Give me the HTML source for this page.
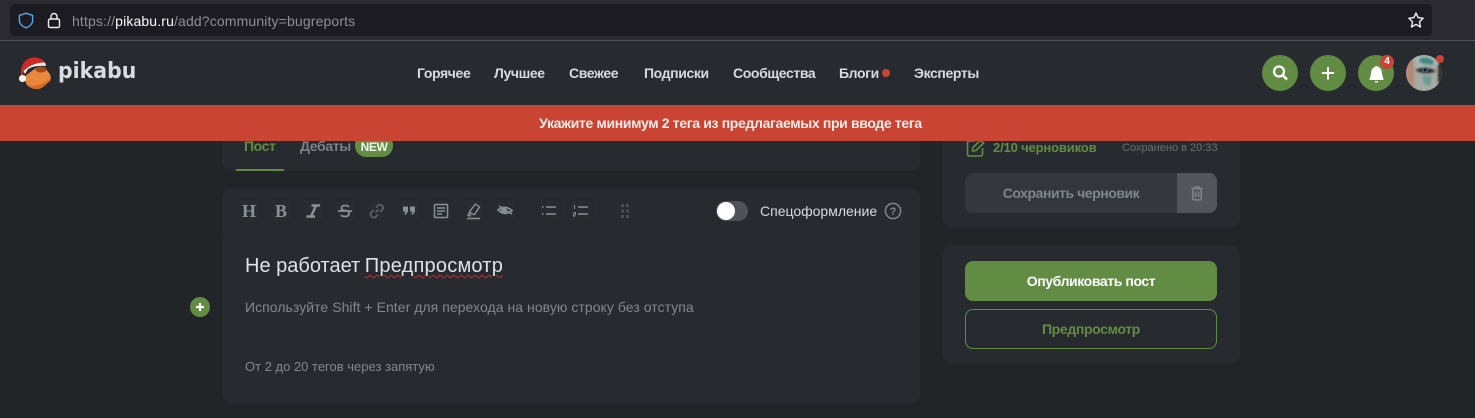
<!DOCTYPE html>
<html><head><meta charset="utf-8"><style>
*{box-sizing:border-box}
html,body{margin:0;padding:0}
body{width:1475px;height:418px;background:#212528;position:relative;overflow:hidden;font-family:"Liberation Sans","Noto Sans CJK SC",sans-serif}
.a{position:absolute;white-space:nowrap}
.nav{top:65px;font-size:14px;font-weight:700;color:#d7dbe0;line-height:17px;letter-spacing:-.38px}
.tb{position:absolute;top:199px;width:24px;height:24px;border-radius:5px;background:#282c30;border:1px solid #24282b}
.tb svg{position:absolute;left:0;top:0}
.g{background:#628c44}
.c{position:absolute;border-radius:50%;background:#628c44}
</style></head><body>
<div class="a" style="left:0;top:0;width:1475px;height:41px;background:#2b2a33;border-bottom:1px solid #53525c"></div>
<div class="a" style="left:10px;top:4px;width:1422px;height:32px;background:#1c1b22;border-radius:5px"></div>
<svg class="a" style="left:18px;top:12px" width="16" height="17" viewBox="0 0 16 17"><path d="M8 1.200 L14.600 3.400 V8.500 C14.600 12 11.500 14.700 8 15.800 C4.500 14.700 1.400 12 1.400 8.500 V3.400 Z" fill="none" stroke="#54a8e8" stroke-width="1.400"/></svg>
<svg class="a" style="left:47px;top:12px" width="14" height="17" viewBox="0 0 14 17"><rect x="1.500" y="7" width="11" height="8.500" rx="1.500" fill="none" stroke="#f0f0f3" stroke-width="1.400"/><path d="M4 7V4.500a3 3 0 0 1 6 0V7" fill="none" stroke="#f0f0f3" stroke-width="1.400"/></svg>
<div class="a" style="left:72px;top:13px;font-size:14px;line-height:16px;letter-spacing:.14px;color:#8f8f96">https://<span style="color:#fbfbfe">pikabu.ru</span>/add?community=bugreports</div>
<svg class="a" style="left:1407px;top:11px" width="18" height="18" viewBox="0 0 18 18"><path d="M9 2 L11.100 6.600 L16.200 7.300 L12.500 10.800 L13.500 16 L9 13.400 L4.500 16 L5.500 10.800 L1.800 7.300 L6.900 6.600 Z" fill="none" stroke="#f0f0f3" stroke-width="1.400" stroke-linejoin="round"/></svg>

<div class="a" style="left:0;top:41px;width:1475px;height:64px;background:#272b2f"></div>
<svg class="a" style="left:17px;top:55px" width="36" height="36" viewBox="0 0 36 36">
<path d="M8 21 L19 13 Q24 10 28 13 L32 18 Q35 22 33 26 L26 32 Q22 35 16 33.500 Q10 32 8.500 27 Z" fill="#e8883a"/>
<path d="M11 30 Q21 33 33 24 Q34 25 33 26 L26 32 Q22 35 16 33.500Q13 33 11 30Z" fill="#d76a1e"/>
<ellipse cx="24" cy="14.500" rx="5.500" ry="3" fill="#a5451e"/>
<path d="M4 22 Q3 8 11 4 Q18 0.500 26 5 L29 10 Q18 6 8 14 Q6 17 6 22Z" fill="#d02a26"/>
<path d="M6.500 16 Q15 7.500 28 7.500 L29 11 Q18 10 11 14 L8 19Z" fill="#f4f1ee"/>
<circle cx="5.500" cy="23.500" r="3.600" fill="#f6f4f2"/></svg>
<div class="a" style="left:58px;top:57px;font-size:22px;font-weight:700;line-height:30px;color:#d9dde0;font-family:'DejaVu Sans',sans-serif;transform-origin:left;transform:scaleX(.93)">pikabu</div>

<div class="a nav" style="left:417px">Горячее</div>
<div class="a nav" style="left:494px">Лучшее</div>
<div class="a nav" style="left:569px">Свежее</div>
<div class="a nav" style="left:644px">Подписки</div>
<div class="a nav" style="left:733px">Сообщества</div>
<div class="a nav" style="left:839px">Блоги</div>
<div class="c" style="left:882px;top:69px;width:8px;height:8px;background:#c94433"></div>
<div class="a nav" style="left:914px">Эксперты</div>

<div class="c" style="left:1262px;top:55px;width:36px;height:36px"></div>
<svg class="a" style="left:1262px;top:55px" width="36" height="36" viewBox="0 0 36 36"><circle cx="17" cy="16.500" r="5" fill="none" stroke="#fff" stroke-width="2.200"/><path d="M20.500 20L25 24.500" stroke="#fff" stroke-width="2.600"/></svg>
<div class="c" style="left:1310px;top:55px;width:36px;height:36px"></div>
<svg class="a" style="left:1310px;top:55px" width="36" height="36" viewBox="0 0 36 36"><path d="M18 12V24.500M11.800 18H24.200" stroke="#fff" stroke-width="2"/></svg>
<div class="c" style="left:1358px;top:55px;width:36px;height:36px"></div>
<svg class="a" style="left:1358px;top:55px" width="36" height="36" viewBox="0 0 36 36"><path d="M18.500 11.500 Q23.500 13 23.500 19 L25 24.500 H12 L13.500 19 Q13.500 13 18.500 11.500Z" fill="#fff" stroke="#fff"/><rect x="17" y="26" width="3" height="1.500" fill="#fff"/></svg>
<div class="c" style="left:1380px;top:55px;width:14px;height:14px;background:#c94433"></div>
<div class="a" style="left:1380px;top:55px;width:14px;text-align:center;font-size:10px;font-weight:700;line-height:14px;color:#fff">4</div>
<svg class="a" style="left:1406px;top:55px" width="40" height="36" viewBox="0 0 40 36">
<defs><clipPath id="av"><circle cx="18" cy="18" r="18"/></clipPath><filter id="bl"><feGaussianBlur stdDeviation="1.100"/></filter></defs>
<g clip-path="url(#av)"><rect width="36" height="36" fill="#a8aaa4"/>
<g filter="url(#bl)">
<rect x="-2" y="0" width="10" height="38" fill="#b48a76"/>
<rect x="32" y="8" width="5" height="20" fill="#302e2d"/>
<path d="M8 0H32V10L8 12Z" fill="#a5b8b3"/>
<path d="M14 3Q22 1 28 6L27 10 18 9 13 7Z" fill="#3d8a82"/>
<path d="M16 21Q20 20 26 21L24 31 18 29Z" fill="#6d9c93"/>
<path d="M9 15Q19 10 30 16Q20 21 9 15Z" fill="#232528"/></g>
<ellipse cx="19" cy="15" rx="3.500" ry="2.600" fill="#4a5c74"/><circle cx="19" cy="15" r="1.300" fill="#0c0d0f"/></g>
<circle cx="34" cy="4" r="4" fill="#c94433"/></svg>

<!-- cards -->
<div class="a" style="left:222px;top:120px;width:698px;height:51px;background:#272b2f;border-radius:10px"></div>
<div class="a" style="left:244px;top:138px;font-size:14px;font-weight:700;line-height:16px;letter-spacing:-.4px;color:#628c44">Пост</div>
<div class="a" style="left:236px;top:169px;width:48px;height:2px;background:#628c44"></div>
<div class="a" style="left:300px;top:138px;font-size:14px;font-weight:700;line-height:16px;letter-spacing:-.35px;color:#7d8188">Дебаты</div>
<div class="a" style="left:355px;top:134px;width:38px;height:23px;border-radius:11px;background:#628c44;color:#f2f5ef;font-size:12px;font-weight:700;text-align:center;line-height:26px;letter-spacing:-.4px">NEW</div>

<div class="a" style="left:222px;top:188px;width:698px;height:216px;background:#272b2f;border-radius:10px"></div>
<div class="a" style="left:222px;top:234px;width:698px;height:1px;background:#24282b"></div>

<div class="tb" style="left:237px"><svg width="22" height="22" viewBox="0 0 22 22"><text x="11" y="17" text-anchor="middle" font-size="18" font-weight="700" fill="#8b8f98" font-family="Liberation Serif">H</text></svg></div>
<div class="tb" style="left:269px"><svg width="22" height="22" viewBox="0 0 22 22"><text x="11" y="17" text-anchor="middle" font-size="18" font-weight="700" fill="#8b8f98" font-family="Liberation Serif">B</text></svg></div>
<div class="tb" style="left:301px"><svg width="22" height="22" viewBox="0 0 22 22"><path d="M9.500 5.500H18M4.500 16.500H13M14 5.500L9 16.500" stroke="#8b8f98" stroke-width="2.400" fill="none"/></svg></div>
<div class="tb" style="left:333px"><svg width="22" height="22" viewBox="0 0 22 22"><path d="M15 7Q14 5.500 11 5.500Q7.500 5.500 7.500 8Q7.500 10.500 11 10.500Q15 10.500 15 13.500Q15 16.500 11 16.500Q8 16.500 7 15M4 11H18" stroke="#8b8f98" stroke-width="1.800" fill="none"/></svg></div>
<div class="tb" style="left:365px;background:#282c30;border-color:#272b2e"><svg width="22" height="22" viewBox="0 0 22 22"><path d="M9.500 12.500L12.500 9.500M10 7.500L12.500 5Q14 3.800 16 5.500Q18 7.500 16.500 9.500L14 12M12 14.500L9.500 17Q7.500 18.300 5.500 16.500Q3.800 14.500 5 12.500L7.500 10" stroke="#5d6168" stroke-width="1.700" fill="none"/></svg></div>
<div class="tb" style="left:397px"><svg width="22" height="22" viewBox="0 0 22 22"><path d="M5 6.500H10V11.500L8 14.500H6.500L7.200 11.500H5ZM12 6.500H17V11.500L15 14.500H13.500L14.200 11.500H12Z" fill="#8b8f98"/></svg></div>
<div class="tb" style="left:429px"><svg width="22" height="22" viewBox="0 0 22 22"><rect x="4.500" y="4.500" width="13" height="13" rx="1" fill="none" stroke="#8b8f98" stroke-width="1.500"/><path d="M7 8H15M7 11H15M7 14H12" stroke="#8b8f98" stroke-width="1.500"/></svg></div>
<div class="tb" style="left:461px"><svg width="22" height="22" viewBox="0 0 22 22"><path d="M13.500 4L17.500 7L12.500 14.500L9 14L8 11ZM8 11.500L6 15.500L9 16M5 18.500H18" stroke="#8b8f98" stroke-width="1.400" fill="none"/></svg></div>
<div class="tb" style="left:493px"><svg width="22" height="22" viewBox="0 0 22 22"><path d="M4 10Q11 4.500 18 10.500Q11 16.500 4 10Z" fill="none" stroke="#8b8f98" stroke-width="1.600"/><circle cx="10" cy="10.500" r="3" fill="#8b8f98"/><path d="M5 6L18 14" stroke="#8b8f98" stroke-width="1.600"/></svg></div>
<div class="tb" style="left:537px"><svg width="22" height="22" viewBox="0 0 22 22"><path d="M8 7H18M8 14H18" stroke="#8b8f98" stroke-width="1.600"/><path d="M4 7H5.500M4 14H5.500" stroke="#8b8f98" stroke-width="1.400"/></svg></div>
<div class="tb" style="left:569px"><svg width="22" height="22" viewBox="0 0 22 22"><path d="M8 7H18M8 14H18" stroke="#8b8f98" stroke-width="1.600"/><path d="M4.500 5V9M3.500 12.500H5.500V14.200H3.500V16H5.500" stroke="#8b8f98" stroke-width="1" fill="none"/></svg></div>
<div class="tb" style="left:613px;background:#282c30;border-color:#272b2e"><svg width="22" height="22" viewBox="0 0 22 22"><g fill="#4b4f54"><rect x="7" y="4" width="3" height="3"/><rect x="12" y="4" width="3" height="3"/><rect x="7" y="9.500" width="3" height="3"/><rect x="12" y="9.500" width="3" height="3"/><rect x="7" y="15" width="3" height="3"/><rect x="12" y="15" width="3" height="3"/></g></svg></div>

<div class="a" style="left:716px;top:201px;width:32px;height:20px;border-radius:10px;background:#4f5358"></div>
<div class="c" style="left:717px;top:202px;width:18px;height:18px;background:#fff"></div>
<div class="a" style="left:760px;top:203px;font-size:14px;line-height:17px;color:#d7dbe0">Спецоформление</div>
<svg class="a" style="left:884px;top:202px" width="18" height="18" viewBox="0 0 18 18"><circle cx="9" cy="9" r="7.600" fill="none" stroke="#83878d" stroke-width="1.500"/><text x="9" y="13" text-anchor="middle" font-size="11" font-weight="700" fill="#83878d" font-family="Liberation Sans">?</text></svg>

<div class="a" style="left:245px;top:255px;font-size:20px;line-height:22px;color:#dfe2e6">Не работает <span style="letter-spacing:.22px;margin-left:-1px;text-decoration:underline wavy #e81c1c 1px;text-underline-offset:2px">Предпросмотр</span></div>
<div class="a" style="left:245px;top:299px;font-size:14px;line-height:17px;letter-spacing:.05px;color:#83878f">Используйте Shift + Enter для перехода на новую строку без отступа</div>
<div class="a" style="left:245px;top:359px;font-size:13px;line-height:16px;color:#83878f">От 2 до 20 тегов через запятую</div>
<div class="c" style="left:190px;top:297px;width:20px;height:20px"></div>
<svg class="a" style="left:190px;top:297px" width="20" height="20" viewBox="0 0 20 20"><path d="M10 6V14M6 10H14" stroke="#fff" stroke-width="2.200"/></svg>

<!-- right -->
<div class="a" style="left:942px;top:120px;width:298px;height:108px;background:#272b2f;border-radius:10px"></div>
<svg class="a" style="left:966px;top:138px" width="20" height="20" viewBox="0 0 20 20"><path d="M9 3H3.500Q1.500 3 1.500 5V16Q1.500 18 3.500 18H14.500Q16.500 18 16.500 16V10" fill="none" stroke="#628c44" stroke-width="1.600"/><path d="M6.500 13L7 9.500L14.500 2L17.500 5L10 12.500Z" fill="none" stroke="#628c44" stroke-width="1.600"/></svg>
<div class="a" style="left:993px;top:140px;font-size:13px;font-weight:700;line-height:16px;letter-spacing:-.15px;color:#628c44">2/10 черновиков</div>
<div class="a" style="left:1122px;top:141px;font-size:11px;line-height:14px;color:#6c7076">Сохранено в 20:33</div>
<div class="a" style="left:965px;top:173px;width:212px;height:40px;background:#33373c;border-radius:8px 0 0 8px;text-align:center;font-size:14px;font-weight:700;line-height:41px;letter-spacing:-.45px;color:#81858d">Сохранить черновик</div>
<div class="a" style="left:1177px;top:173px;width:40px;height:40px;background:#52565b;border-radius:0 8px 8px 0"></div>
<svg class="a" style="left:1187px;top:183px" width="20" height="20" viewBox="0 0 20 20"><path d="M4.500 5.500H15.500M8 5.500V4H12V5.500M5.800 5.500V15.500Q5.800 16.800 7 16.800H13Q14.200 16.800 14.200 15.500V5.500M8.500 8.500V14M11.500 8.500V14" fill="none" stroke="#7d8187" stroke-width="1.700"/></svg>

<div class="a" style="left:942px;top:246px;width:298px;height:118px;background:#272b2f;border-radius:10px"></div>
<div class="a g" style="left:965px;top:261px;width:252px;height:40px;border-radius:8px;text-align:center;font-size:14px;font-weight:700;line-height:41px;letter-spacing:-.4px;color:#fff">Опубликовать пост</div>
<div class="a" style="left:965px;top:309px;width:252px;height:40px;border-radius:8px;border:1px solid #628c44;text-align:center;font-size:14px;font-weight:700;line-height:39px;letter-spacing:-.35px;color:#628c44">Предпросмотр</div>

<div class="a" style="left:0;top:105px;width:1475px;height:36px;padding-right:14px;background:#c94433;text-align:center;font-size:14px;font-weight:700;line-height:37px;letter-spacing:-.34px;color:#f6ebe8">Укажите минимум 2 тега из предлагаемых при вводе тега</div>
</body></html>
